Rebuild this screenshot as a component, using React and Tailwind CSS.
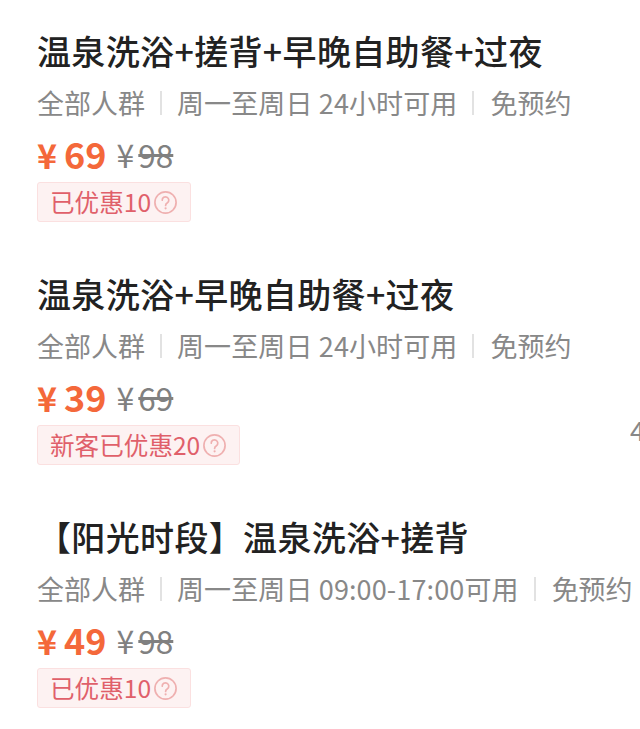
const FONT = "font-['Noto_Sans_CJK_SC','Noto_Sans',sans-serif]";

function Help() {
  return (
    <svg width="23" height="23" viewBox="0 0 23 23" className="shrink-0 ml-[3px] translate-y-[1px]" fill="none">
      <circle cx="11.5" cy="11.5" r="10.6" stroke="#efb0b0" strokeWidth="1.7" />
      <path d="M8.2 9.2a3.3 3.3 0 1 1 5.2 2.6c-1.2.8-1.8 1.3-1.8 2.7" stroke="#efb0b0" strokeWidth="1.7" strokeLinecap="round" />
      <circle cx="11.6" cy="17.3" r="1.1" fill="#efb0b0" />
    </svg>
  );
}

function Sep() {
  return <span className="w-[2px] h-[24px] bg-[#e2e2e2] shrink-0 ml-[15px]" />;
}

function Deal({ title, time, price, was, tag, trailing }) {
  return (
    <div className="flex flex-col items-start h-[243px]">
      <div className="text-[34px] leading-[44px] tracking-[0.35px] font-medium text-[#222222] whitespace-nowrap mt-[29px]">
        {title}
      </div>
      <div className="flex items-center text-[27px] leading-[36px] text-[#888888] whitespace-nowrap mt-[12px]">
        <span>全部人群</span>
        <Sep />
        <span className="ml-[15px] tracking-[0.12px]">周一至周日 {time}可用</span>
        <Sep />
        <span className="ml-[16px]">免预约</span>
      </div>
      <div className="flex items-baseline whitespace-nowrap mt-[11px] h-[42px]">
        <span className="text-[34px] leading-[42px] font-bold text-[#f4683a]">¥</span>
        <span className="ml-[7px] text-[36px] leading-[42px] font-bold text-[#f4683a]">{price}</span>
        <span className="ml-[10px] text-[32px] leading-[42px] text-[#808080] -translate-y-[1px]">¥</span>
        <span className="ml-[4px] text-[31.5px] leading-[42px] text-[#808080] line-through -translate-y-[1px]">{was}</span>
      </div>
      <div className="self-stretch flex items-start justify-between mt-[8px]">
        <div className="flex items-center h-[40px] pl-[12px] pr-[13px] pb-[2px] rounded-[3px] border border-[#fbe0e0] bg-[#fdf2f2] text-[24.6px] text-[#e0606a] whitespace-nowrap">
          <span>{tag}</span>
          <Help />
        </div>
        {trailing}
      </div>
    </div>
  );
}

export default function App() {
  return (
    <div className={`w-[640px] h-[729px] overflow-hidden bg-white pl-[37px] ${FONT}`}>
      <Deal title="温泉洗浴+搓背+早晚自助餐+过夜" time="24小时" price="69" was="98" tag="已优惠10" />
      <Deal
        title="温泉洗浴+早晚自助餐+过夜"
        time="24小时"
        price="39"
        was="69"
        tag="新客已优惠20"
        trailing={<span className="text-[27px] leading-[36px] text-[#888888] w-[10px] overflow-hidden -mt-[13px]">4</span>}
      />
      <Deal title="【阳光时段】温泉洗浴+搓背" time="09:00-17:00" price="49" was="98" tag="已优惠10" />
    </div>
  );
}
